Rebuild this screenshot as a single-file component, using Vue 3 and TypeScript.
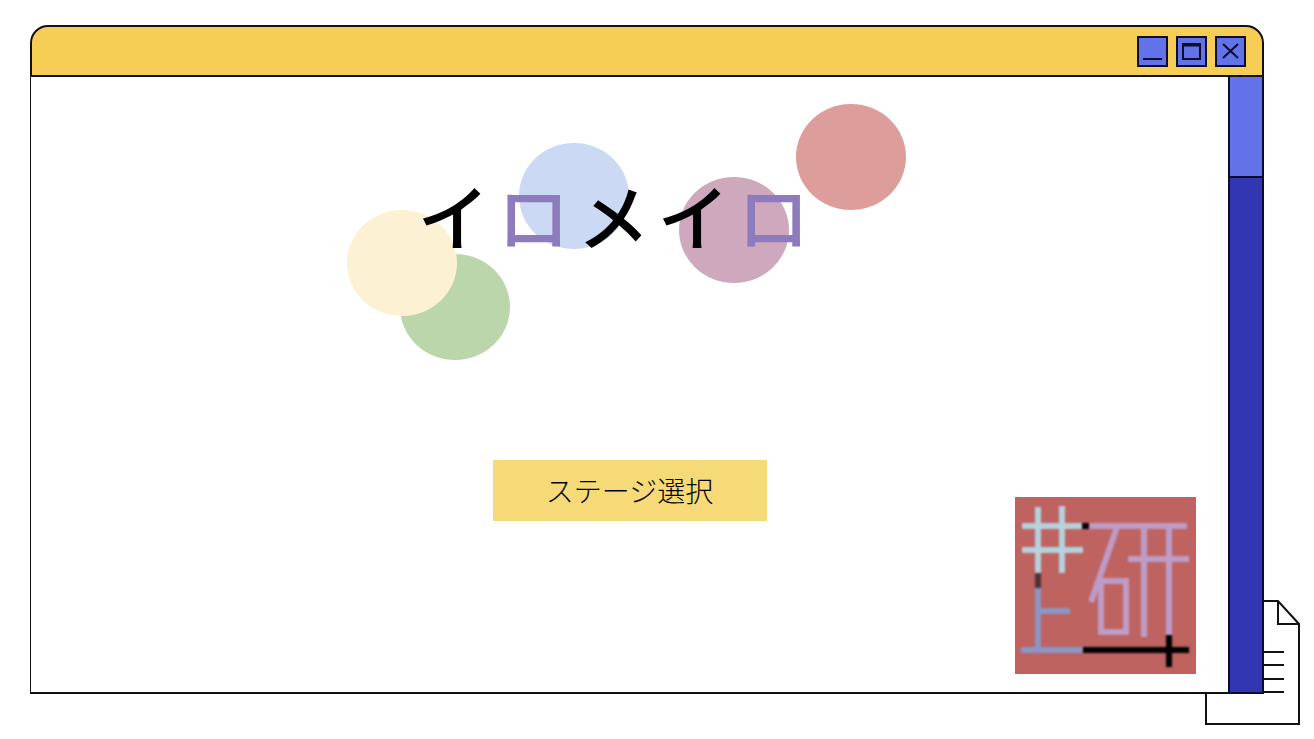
<script setup lang="ts">
interface Glyph {
  char: string
  accent: boolean
}

const title: Glyph[] = [
  { char: 'イ', accent: false },
  { char: 'ロ', accent: true },
  { char: 'メ', accent: false },
  { char: 'イ', accent: false },
  { char: 'ロ', accent: true },
]

const bubbles: string[] = ['green', 'yellow', 'blue', 'pink', 'red']
</script>

<template>
  <div class="desktop">
    <svg class="paper" viewBox="0 0 96 126" aria-hidden="true">
      <path d="M1 1H73L94 24V124H1Z" fill="#fff" />
      <path d="M73 1V24H94" />
      <path d="M40 52H79M40 65H79M40 79H79M40 92H79" />
    </svg>

    <div class="window">
      <header class="bar">
        <button class="control" type="button" aria-label="最小化">
          <svg viewBox="0 0 27 27"><path d="M4 21H23" /></svg>
        </button>
        <button class="control" type="button" aria-label="最大化">
          <svg viewBox="0 0 27 27">
            <path d="M5 6H22V21H5Z" />
            <path d="M4 7H23" stroke-width="3" />
          </svg>
        </button>
        <button class="control" type="button" aria-label="閉じる">
          <svg viewBox="0 0 27 27"><path d="M6 6L21 20M21 6L6 20" /></svg>
        </button>
      </header>

      <div class="body">
        <main class="content">
          <div class="stack">
            <div class="hero">
              <span v-for="name in bubbles" :key="name" class="bubble" :class="name"></span>
              <h1 class="title">
                <span v-for="(g, i) in title" :key="i" :class="{ accent: g.accent }">{{ g.char }}</span>
              </h1>
            </div>
            <button class="start" type="button">ステージ選択</button>
          </div>

          <svg class="logo" viewBox="0 0 181 177" role="img" aria-label="井上研">
            <rect width="181" height="177" fill="#be6360" />
            <g class="strokes">
              <path stroke="#b4d3de" d="M7 29H68M7 53H68M23 10V76M47 9V76" />
              <path stroke="#bd9cc7" d="M74 29H172M102 30L76 105M86 84H111V135H86ZM129 29V140M154 29V138M113 62H174" />
              <path stroke="#8b96c5" d="M23 91V153M23 114H55M6 153H68" />
              <path stroke="#4e3336" d="M23 76V91" />
              <path stroke="#000" d="M67 29H74M68 153H174M154 138V170" />
            </g>
          </svg>
        </main>
        <div class="scrollbar">
          <div class="thumb"></div>
        </div>
      </div>
    </div>
  </div>
</template>

<style>
body {
  margin: 0;
  background: #fff;
}
</style>

<style scoped>
.desktop {
  position: relative;
  box-sizing: border-box;
  display: flex;
  min-height: 100vh;
  padding: 25px 50px 45px 30px;
  font-family: "Noto Sans CJK JP", sans-serif;
  color: #000;
}

.paper {
  position: absolute;
  right: 13px;
  bottom: 13px;
  width: 96px;
  height: 126px;
  fill: none;
  stroke: #111;
  stroke-width: 2;
}

.window {
  position: relative;
  flex: 1;
  display: flex;
  flex-direction: column;
}

.bar {
  box-sizing: border-box;
  display: flex;
  justify-content: flex-end;
  align-items: center;
  gap: 8px;
  height: 52px;
  padding-right: 16px;
  border: 2px solid #111;
  border-radius: 18px 18px 0 0;
  background: #f6cd55;
}

.control {
  box-sizing: border-box;
  width: 31px;
  height: 31px;
  padding: 0;
  border: 2px solid #0c0c2c;
  background: #6272e9;
}

.control svg {
  display: block;
  width: 27px;
  height: 27px;
  fill: none;
  stroke: #0c0c2c;
  stroke-width: 2;
}

.body {
  flex: 1;
  display: flex;
}

.content {
  flex: 1;
  display: grid;
  border: solid #111;
  border-width: 0 0 2px 1px;
  background: #fff;
}

.stack {
  grid-area: 1 / 1;
  display: flex;
  flex-direction: column;
  align-items: center;
  gap: 100px;
  padding-top: 27px;
}

.hero {
  position: relative;
  width: 566px;
  height: 256px;
}

.bubble {
  position: absolute;
  width: 110px;
  height: 106px;
  border-radius: 50%;
}

.green {
  left: 53px;
  top: 150px;
  background: #bcd6ac;
}

.yellow {
  left: 0;
  top: 106px;
  background: #fdf1d3;
}

.blue {
  left: 172px;
  top: 39px;
  background: #ccd9f5;
}

.pink {
  left: 332px;
  top: 73px;
  background: #cea8bd;
}

.red {
  left: 449px;
  top: 0;
  background: #dd9d9a;
}

.title {
  position: relative;
  display: flex;
  gap: 8px;
  margin: 0;
  padding: 70px 0 0 71px;
  font-size: 72px;
  line-height: 80px;
  font-weight: 500;
}

.accent {
  color: #8d7bbd;
}

.start {
  width: 274px;
  height: 61px;
  padding: 0 0 2px;
  border: 0;
  background: #f7da78;
  color: #000;
  font-family: inherit;
  font-size: 28px;
  font-weight: 300;
}

.logo {
  grid-area: 1 / 1;
  place-self: end;
  width: 181px;
  height: 177px;
  margin: 0 32px 18px 0;
}

.strokes {
  fill: none;
  stroke-width: 6;
  filter: blur(1px);
}

.scrollbar {
  box-sizing: border-box;
  width: 36px;
  border: 2px solid #0c0c2c;
  border-top: 0;
  background: #3236b2;
}

.thumb {
  height: 99px;
  border-bottom: 2px solid #0c0c2c;
  background: #6272e9;
}
</style>
